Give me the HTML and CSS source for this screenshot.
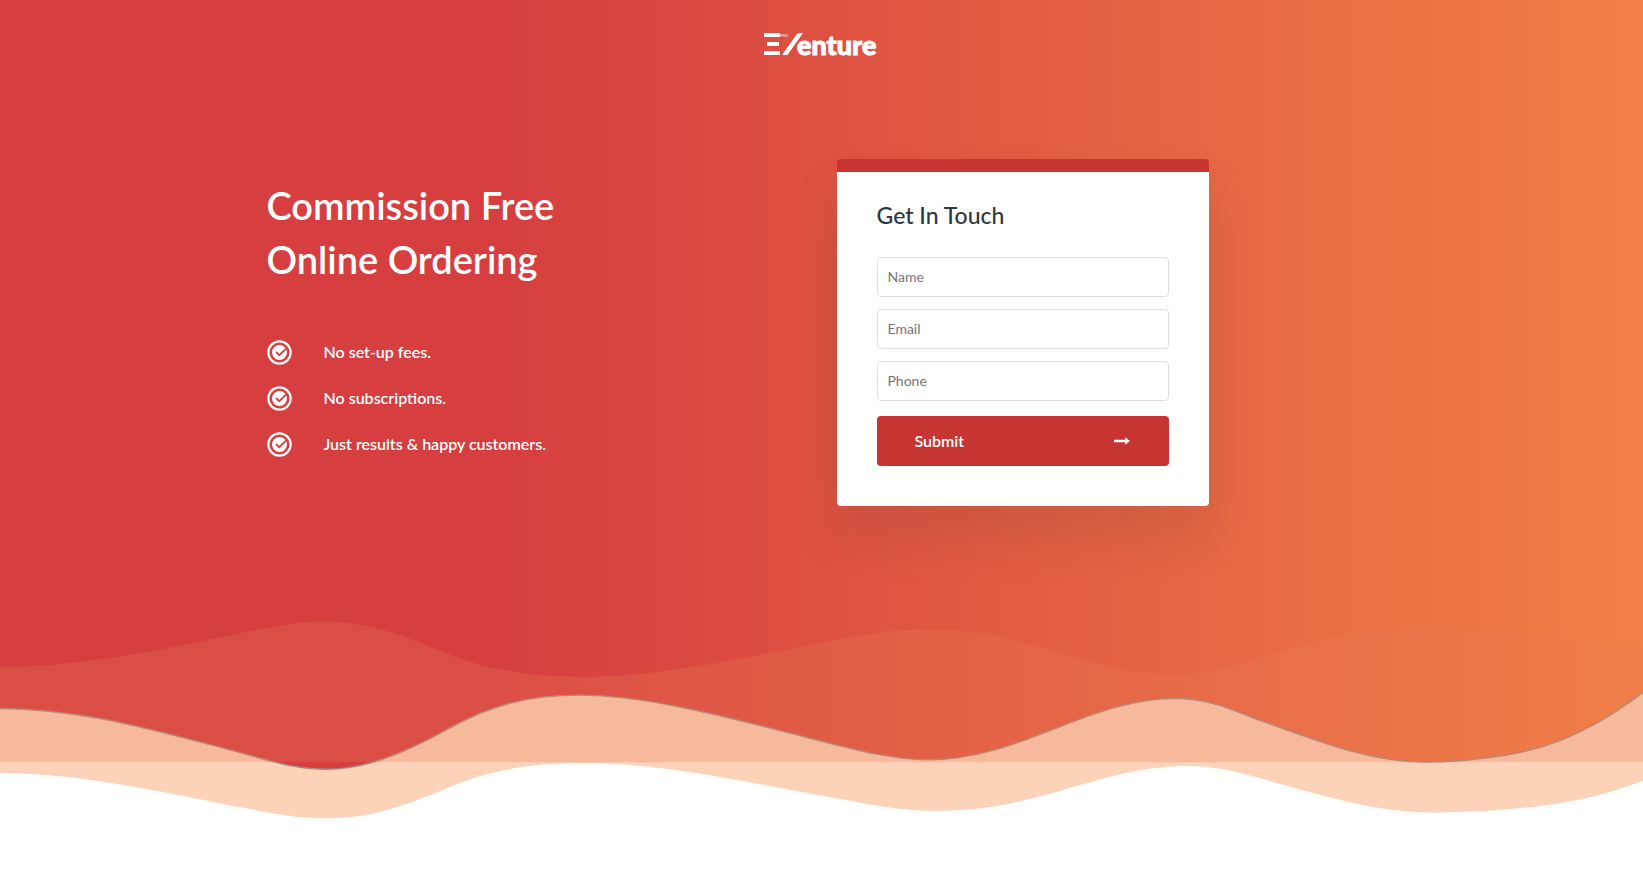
FILE: index.html
```html
<!DOCTYPE html>
<html lang="en">
<head>
<meta charset="utf-8">
<meta name="viewport" content="width=device-width, initial-scale=1">
<title>Commission Free Online Ordering</title>
<link rel="stylesheet" href="styles.css">
</head>
<body>
<svg class="defs" aria-hidden="true">
  <symbol id="check" viewBox="0 0 24 24">
    <circle cx="12" cy="12" r="10.7" fill="none" stroke="#fff" stroke-width="2.1"/>
    <circle cx="12" cy="12" r="7.2" fill="#fff"/>
    <path d="M8.700 11.500l3 3L18.600 8" fill="none" stroke="#d63e40" stroke-width="1.800"/>
  </symbol>
</svg>
<div class="page">
  <header class="header">
    <a class="logo" href="#" aria-label="EVenture home">
      <svg width="116" height="28" viewBox="0 0 116 28">
        <path d="M0 0h16v4H0zM3 9h12v4H3zM0 18h16v4H0z" fill="#fff"/>
        <path d="M18 22L32.500 1.500Q33.500 0 35.500 0H39L23.500 22z" fill="#fff"/>
        <text class="logo-tag" x="16" y="4">PRO</text>
        <text class="logo-name" x="33" y="22">enture</text>
      </svg>
    </a>
  </header>
  <main class="content">
    <section class="intro">
      <h1 class="title">Commission Free<br>Online Ordering</h1>
      <ul class="benefits">
        <li class="benefit"><svg class="check"><use href="#check"/></svg>No set-up fees.</li>
        <li class="benefit"><svg class="check"><use href="#check"/></svg>No subscriptions.</li>
        <li class="benefit"><svg class="check"><use href="#check"/></svg>Just results &amp; happy customers.</li>
      </ul>
    </section>
    <form class="card">
      <h2 class="card-title">Get In Touch</h2>
      <input class="field" type="text" placeholder="Name" aria-label="Name">
      <input class="field" type="email" placeholder="Email" aria-label="Email">
      <input class="field" type="tel" placeholder="Phone" aria-label="Phone">
      <button class="submit" type="submit">Submit
        <svg width="16" height="10" viewBox="0 0 16 10"><path d="M0 4.700h11V2.300L16 6l-5 3.700V7.300H0z" fill="#fff"/></svg>
      </button>
    </form>
  </main>
  <svg class="waves" viewBox="0 622 1643 285" preserveAspectRatio="none" aria-hidden="true">
    <path d="M-5 715C80 715 150 737 210 753S290 779 326 779S400 765 449 736C490 712 527 701 580 701C650 701 740 728 805 745C850 757 890 769 929 769C1020 769 1090 704 1175 704.500C1205 704.500 1225 713 1251 724C1320 750 1370 771.500 1426 771.500C1520 769 1575 754 1648 694V910H-5z" fill="#fcd2b8" stroke="#a58c83" stroke-width="1.500"/>
    <path d="M0 783C85 783 180 807 235 818S305 830.500 330 830.500C370 830.500 405 817 438 803C480 783 520 772.500 585 772.500C670 772.500 770 798 850 812C880 818 905 822.700 940 822.700C1040 822.700 1100 775.500 1188 775.500C1225 775.500 1250 786 1303 801C1350 814 1385 824.500 1440 824.500C1540 822 1590 812 1643 791V910H0z" fill="#fff"/>
    <path d="M0 671.500C85 671.500 180 649 235 637S300 623.500 324 623.500C365 623.500 400 637 438 653C475 671 520 681.700 585 681.700C670 681.700 770 656 840 642C870 636 895 631.600 929 631.600C1030 631.600 1090 679.600 1174 679.600C1215 679.600 1255 662 1303 648C1350 634 1380 630 1426 630C1500 631 1570 643 1643 649V771.500H0z" fill="#eb7a52" fill-opacity=".28"/>
  </svg>
</div>
</body>
</html>
```
FILE: styles.css
```css
* {
  box-sizing: border-box;
}

body {
  margin: 0;
  font-family: Lato, "Open Sans", sans-serif;
  font-size: 16px;
  color: #fff;
}

.defs {
  position: absolute;
  width: 0;
  height: 0;
}

.page {
  display: flex;
  flex-direction: column;
  min-height: 100vh;
  background: linear-gradient(90deg, #d63e40 30%, #f28046);
}

.header {
  display: flex;
  justify-content: center;
  padding: 33px 16px 0;
}

.logo {
  display: block;
  height: 28px;
}

.logo svg {
  display: block;
  overflow: visible;
}

.logo-name {
  font-size: 27px;
  font-weight: 900;
  fill: #fff;
  stroke: #fff;
  stroke-width: 1px;
}

.logo-tag {
  font-size: 4px;
  fill: #fff;
}

.content {
  display: grid;
  grid-template-columns: repeat(auto-fit, minmax(300px, 1fr));
  gap: 30px;
  align-items: start;
  width: 100%;
  max-width: 1140px;
  margin: 0 auto;
  padding: 98px 15px 40px;
}

.intro {
  padding-top: 19px;
}

.title {
  margin: 0;
  font-size: 38px;
  font-weight: 600;
  line-height: 54px;
}

.benefits {
  margin: 53px 0 0;
  padding: 0;
  list-style: none;
}

.benefit {
  display: flex;
  align-items: center;
  gap: 32px;
  height: 24px;
  margin-bottom: 22px;
  font-weight: 600;
}

.check {
  flex: none;
  width: 25px;
  height: 25px;
  margin-top: 3px;
}

.card {
  display: flex;
  flex-direction: column;
  gap: 12px;
  width: 100%;
  max-width: 372px;
  padding: 27px 40px 40px;
  border-top: 13px solid #c73532;
  border-radius: 4px;
  background: #fff;
  box-shadow: 0 30px 50px rgba(50, 50, 50, .12);
}

.card-title {
  margin: 0 0 14px;
  font-size: 23px;
  font-weight: 500;
  line-height: 32px;
  color: #2d3640;
}

.field {
  width: 100%;
  height: 40px;
  padding: 0 10px 2px;
  border: 1px solid #ddd;
  border-radius: 4px;
  font: 14px Lato, "Open Sans", sans-serif;
}

.field::placeholder {
  color: #757575;
}

.submit {
  display: flex;
  align-items: center;
  justify-content: space-between;
  height: 50px;
  margin-top: 3px;
  padding: 0 39px 2px 38px;
  border: 0;
  border-radius: 4px;
  background: #c73532;
  color: #fff;
  font: 600 16px Lato, "Open Sans", sans-serif;
}

.waves {
  display: block;
  width: 100%;
  height: 271px;
  margin-top: auto;
}
```
